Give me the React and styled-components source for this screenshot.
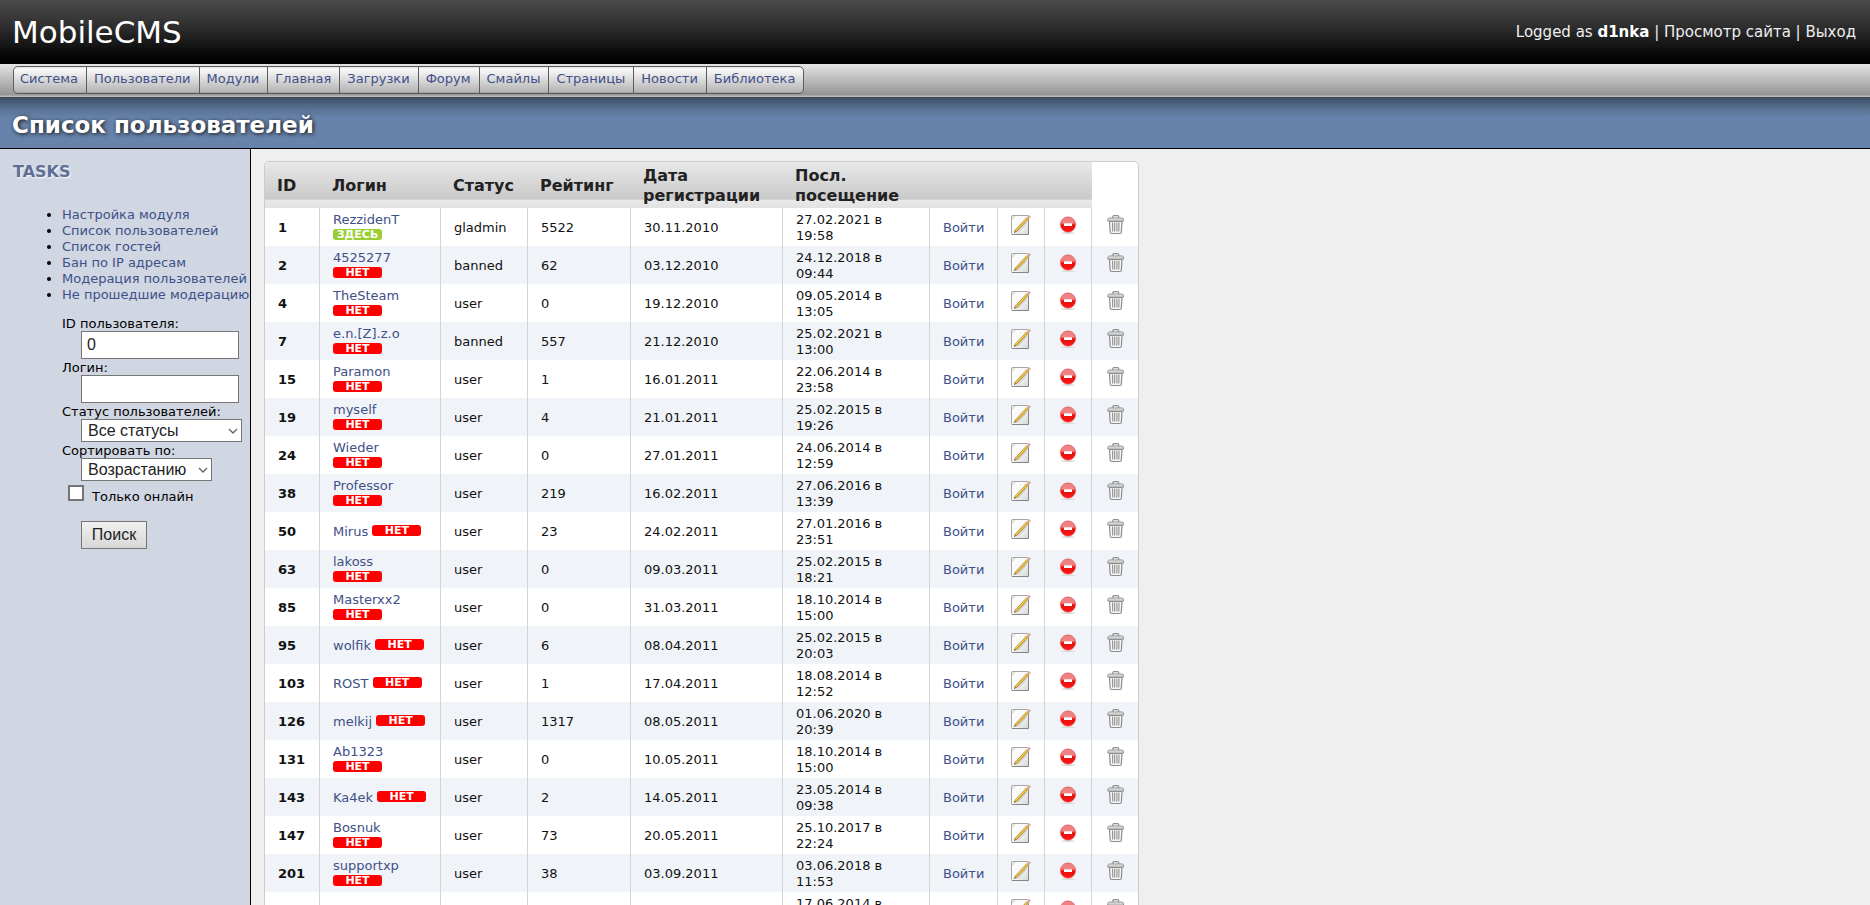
import React from 'react';
import styled, { createGlobalStyle } from 'styled-components';

const GlobalStyle = createGlobalStyle`
  html, body {
    margin: 0;
    padding: 0;
  }
  body {
    font-family: Verdana, "DejaVu Sans", sans-serif;
    font-size: 13px;
    line-height: 16px;
    color: #000;
    background-color: #efefef;
  }
  a {
    color: #405088;
    text-decoration: none;
  }
  a:hover {
    text-decoration: underline;
  }
`;

const Page = styled.div`
  display: flex;
  flex-direction: column;
  min-height: 100vh;
`;

const Header = styled.header`
  display: flex;
  align-items: center;
  justify-content: space-between;
  height: 64px;
  padding: 0 14px 0 12px;
  color: #fff;
  background: linear-gradient(#4b4b4b, #333 35%, #000 95%);
`;

const Logo = styled.h1`
  margin: 0;
  font-size: 31px;
  font-weight: normal;
  line-height: 36px;
`;

const UserBox = styled.div`
  font-size: 15px;
  line-height: 18px;
  color: #eee;
  a {
    color: #eee;
  }
  strong {
    color: #fff;
  }
`;

const NavBar = styled.nav`
  display: flex;
  box-sizing: border-box;
  height: 34px;
  padding: 2px 13px;
  border-bottom: 1px solid #484848;
  background: linear-gradient(#e4e4e4, #949494 31px, #bababa 32px);
`;

const NavList = styled.ul`
  display: flex;
  box-sizing: border-box;
  height: 28px;
  margin: 0;
  padding: 0;
  list-style: none;
  border: 1px solid #5c5c5c;
  border-radius: 5px;
  background: linear-gradient(#e8e8e8 1px, #fafafa 2px, #b4b4b4 25px, #909090 26px);
`;

const NavItem = styled.li`
  padding: 4px 8px 0 7px;
  & + & {
    border-left: 1px solid #5c5c5c;
  }
  &:first-child {
    padding-left: 6px;
  }
`;

const TitleBar = styled.div`
  box-sizing: border-box;
  height: 51px;
  padding: 14px 12px 0;
  border-bottom: 1px solid #000;
  background: linear-gradient(#3f4e67, #57708f 10px, #6883ab 20px);
`;

const Title = styled.h2`
  margin: 0;
  font-size: 23px;
  line-height: 26px;
  color: #fff;
  text-shadow: 1px 1px 4px #111;
`;

const Main = styled.div`
  display: flex;
  flex: 1;
`;

const Sidebar = styled.aside`
  flex: none;
  width: 250px;
  border-right: 1px solid #000;
  background-color: #d0d6e2;
`;

const TasksTitle = styled.h3`
  margin: 13px 13px 0;
  font-size: 16px;
  line-height: 20px;
  color: #5f6f94;
  text-shadow: 1px 1px 2px #fff;
`;

const TaskList = styled.ul`
  margin: 25px 0 0;
  padding-left: 62px;
  white-space: nowrap;
`;

const SearchForm = styled.form`
  display: flex;
  flex-direction: column;
  align-items: flex-start;
  gap: 1px;
  padding: 13px 8px 0 62px;
`;

const Field = styled.div`
  display: flex;
  flex-direction: column;
  align-items: flex-start;
  label {
    line-height: 15px;
    white-space: nowrap;
  }
`;

const control = `
  box-sizing: border-box;
  margin: 0 0 0 19px;
  border: 1px solid #767676;
  border-radius: 0;
  color: #222;
  font-family: "Liberation Sans", Arial, sans-serif;
  font-size: 16px;
`;

const TextInput = styled.input`
  ${control}
  width: 158px;
  height: 28px;
  padding: 0 5px;
  background-color: #fff;
`;

const SelectBox = styled.div`
  position: relative;
  svg {
    position: absolute;
    top: 8px;
    right: 4px;
    pointer-events: none;
  }
`;

const Select = styled.select`
  ${control}
  display: block;
  appearance: none;
  width: ${({ $wide }) => ($wide ? '161px' : '131px')};
  height: 23px;
  padding: 0 6px;
  background-color: #fff;
`;

const CheckRow = styled.label`
  display: flex;
  align-items: flex-start;
  gap: 8px;
  padding: 3px 0 0 6px;
  span {
    padding-top: 4px;
  }
`;

const Checkbox = styled.input`
  appearance: none;
  box-sizing: border-box;
  width: 16px;
  height: 16px;
  margin: 0;
  border: 2px solid #767676;
  background-color: #fff;
  &:checked {
    background-color: #405088;
  }
`;

const SearchButton = styled.button`
  ${control}
  width: 66px;
  height: 28px;
  margin-top: 15px;
  padding: 0;
  background: linear-gradient(#f0f0f0, #d8d8d8);
`;

const Content = styled.main`
  flex: 1;
  padding: 12px 13px;
`;

const UsersTable = styled.table`
  table-layout: fixed;
  width: 875px;
  border: 1px solid #ccc;
  border-radius: 5px;
  border-spacing: 0;
  background-color: #fff;
  overflow: hidden;
`;

const Col = styled.col`
  width: ${({ $w }) => $w}px;
`;

const HeadCell = styled.th`
  padding: 4px 12px 2px;
  font-size: 16px;
  line-height: 20px;
  text-align: left;
  color: #222;
  white-space: nowrap;
  background: linear-gradient(#e9e9e9, #dedede 12px, #cacaca 37px, #dcdcdc 38px) 0 0 / 100% 38px;
`;

const Row = styled.tr`
  &:nth-child(even) {
    background-color: #f0f4f9;
  }
`;

const Cell = styled.td`
  padding: 4px 13px 2px;
  border-right: 1px solid #d4d4d4;
  color: #111;
  font-weight: ${({ $bold }) => ($bold ? 'bold' : 'normal')};
  &:last-child {
    border-right: 0;
  }
`;

const IconCell = styled(Cell)`
  padding: 3px 13px;
`;

const Badge = styled.span`
  display: inline-block;
  overflow: hidden;
  width: 49px;
  height: 11px;
  border-radius: 3px;
  font-size: 11px;
  font-weight: bold;
  line-height: 11px;
  text-align: center;
  color: #fff;
  background-color: ${({ $online }) => ($online ? '#9acd32' : '#f00')};
`;

const navItems = [
  'Система', 'Пользователи', 'Модули', 'Главная', 'Загрузки',
  'Форум', 'Смайлы', 'Страницы', 'Новости', 'Библиотека',
];

const tasks = [
  'Настройка модуля',
  'Список пользователей',
  'Список гостей',
  'Бан по IP адресам',
  'Модерация пользователей',
  'Не прошедшие модерацию',
];

const columns = [55, 121, 87, 103, 152, 147, 68, 47, 47, 46];

const shortLogins = ['Mirus', 'wolfik', 'ROST', 'melkij', 'Ka4ek'];

const users = [
  ['1', 'RezzidenT', 'gladmin', '5522', '30.11.2010', '27.02.2021 в 19:58', true],
  ['2', '4525277', 'banned', '62', '03.12.2010', '24.12.2018 в 09:44'],
  ['4', 'TheSteam', 'user', '0', '19.12.2010', '09.05.2014 в 13:05'],
  ['7', 'e.n.[Z].z.o', 'banned', '557', '21.12.2010', '25.02.2021 в 13:00'],
  ['15', 'Paramon', 'user', '1', '16.01.2011', '22.06.2014 в 23:58'],
  ['19', 'myself', 'user', '4', '21.01.2011', '25.02.2015 в 19:26'],
  ['24', 'Wieder', 'user', '0', '27.01.2011', '24.06.2014 в 12:59'],
  ['38', 'Professor', 'user', '219', '16.02.2011', '27.06.2016 в 13:39'],
  ['50', 'Mirus', 'user', '23', '24.02.2011', '27.01.2016 в 23:51'],
  ['63', 'lakoss', 'user', '0', '09.03.2011', '25.02.2015 в 18:21'],
  ['85', 'Masterxx2', 'user', '0', '31.03.2011', '18.10.2014 в 15:00'],
  ['95', 'wolfik', 'user', '6', '08.04.2011', '25.02.2015 в 20:03'],
  ['103', 'ROST', 'user', '1', '17.04.2011', '18.08.2014 в 12:52'],
  ['126', 'melkij', 'user', '1317', '08.05.2011', '01.06.2020 в 20:39'],
  ['131', 'Ab1323', 'user', '0', '10.05.2011', '18.10.2014 в 15:00'],
  ['143', 'Ka4ek', 'user', '2', '14.05.2011', '23.05.2014 в 09:38'],
  ['147', 'Bosnuk', 'user', '73', '20.05.2011', '25.10.2017 в 22:24'],
  ['201', 'supportxp', 'user', '38', '03.09.2011', '03.06.2018 в 11:53'],
];

const Chevron = () => (
  <svg width="10" height="8" viewBox="0 0 10 8" aria-hidden="true">
    <path d="M1 2l4 4 4-4" fill="none" stroke="#666" strokeWidth="1.4" />
  </svg>
);

const EditIcon = () => (
  <svg width="20" height="20" viewBox="0 0 20 20" role="img" aria-label="Редактировать">
    <defs>
      <linearGradient id="sheet" x1="0" y1="0" x2="1" y2="1">
        <stop offset="0" stopColor="#fff" />
        <stop offset=".5" stopColor="#f8f8f8" />
        <stop offset="1" stopColor="#d6d6d6" />
      </linearGradient>
    </defs>
    <rect x=".5" y=".5" width="17" height="19" rx=".8" fill="url(#sheet)" stroke="#a6a6a6" />
    <path d="M17.5 5v14.500H1" fill="none" stroke="#858585" />
    <path d="M1 4.500C3 4.500 4.500 3 4.500 1H1z" fill="#e4e4e4" />
    <path d="M4.500 17.600L15.500 6v3L7.500 17.600z" fill="#c4c4c4" opacity=".6" />
    <path d="M3.300 17.500l.9-2.600L16.200 2.300l1.500 1.500L5.800 16.400z" fill="#e8b024" stroke="#8d702c" strokeWidth=".5" />
    <path d="M5 15.300L16.700 3.200" stroke="#ffdc66" strokeWidth=".7" />
    <path d="M16.200 2.300L18 .6c.7-.5 2 .7 1.400 1.500l-1.700 1.700z" fill="#e0aa98" stroke="#c3a49a" strokeWidth=".4" />
    <path d="M3.300 17.500l.4-1.300.9.800z" fill="#222" />
  </svg>
);

const BanIcon = () => (
  <svg width="20" height="20" viewBox="0 0 20 20" role="img" aria-label="Заблокировать">
    <defs>
      <linearGradient id="ban" x1="0" y1="0" x2="0" y2="1">
        <stop offset="0" stopColor="#e03c3c" />
        <stop offset=".48" stopColor="#ea4444" />
        <stop offset=".52" stopColor="#e80c0c" />
        <stop offset="1" stopColor="#ff1a1a" />
      </linearGradient>
    </defs>
    <ellipse cx="10" cy="18" rx="7" ry="1.200" fill="#ddd" />
    <circle cx="10" cy="9.500" r="7.800" fill="url(#ban)" stroke="#e88" strokeWidth=".5" />
    <path d="M3 8.500a7 6.300 0 0 1 14 0z" fill="#fff" opacity=".35" />
    <rect x="6" y="8.200" width="8" height="2.800" rx=".3" fill="#fff" />
  </svg>
);

const TrashIcon = () => (
  <svg width="20" height="20" viewBox="0 0 20 20" role="img" aria-label="Удалить">
    <g fill="none" stroke="#8c8c8c">
      <path d="M7.800 3V2q0-1.300 1.300-1.300h3.300q1.300 0 1.300 1.300v1" strokeWidth="1.200" />
      <path d="M4.500 6.500l.7 10.800q.1 1.200 1.300 1.200h8.500q1.200 0 1.300-1.200L17 6.500z" fill="#f7f7f7" strokeWidth="1.200" />
      <path d="M2.700 6l.6-2.400q.2-.6.900-.6h13q.7 0 .9.600l.6 2.400z" fill="#f4f4f4" />
      <path d="M3.500 4.500h14.500" stroke="#bbb" strokeWidth=".6" />
      <path d="M7.600 7.500l.2 9M9.700 7.500v9M11.900 7.500v9M14 7.500l-.2 9" stroke="#858585" />
    </g>
  </svg>
);

const UserRow = ({ user }) => {
  const [id, login, status, rating, registered, lastVisit, online] = user;
  return (
    <Row>
      <Cell $bold>{id}</Cell>
      <Cell>
        <a href="#user">{login}</a>
        {shortLogins.includes(login) ? ' ' : <br />}
        <Badge $online={online}>{online ? 'ЗДЕСЬ' : 'НЕТ'}</Badge>
      </Cell>
      <Cell>{status}</Cell>
      <Cell>{rating}</Cell>
      <Cell>{registered}</Cell>
      <Cell>{lastVisit}</Cell>
      <Cell><a href="#login">Войти</a></Cell>
      <Actions />
    </Row>
  );
};

const Actions = () => (
  <>
    <IconCell><a href="#edit"><EditIcon /></a></IconCell>
    <IconCell><a href="#ban"><BanIcon /></a></IconCell>
    <IconCell><a href="#delete"><TrashIcon /></a></IconCell>
  </>
);

const App = () => (
  <Page>
    <GlobalStyle />
    <Header>
      <Logo>MobileCMS</Logo>
      <UserBox>
        Logged as <strong>d1nka</strong> | <a href="#site">Просмотр сайта</a> | <a href="#exit">Выход</a>
      </UserBox>
    </Header>
    <NavBar>
      <NavList>
        {navItems.map(item => (
          <NavItem key={item}><a href="#nav">{item}</a></NavItem>
        ))}
      </NavList>
    </NavBar>
    <TitleBar>
      <Title>Список пользователей</Title>
    </TitleBar>
    <Main>
      <Sidebar>
        <TasksTitle>TASKS</TasksTitle>
        <TaskList>
          {tasks.map(task => (
            <li key={task}><a href="#task">{task}</a></li>
          ))}
        </TaskList>
        <SearchForm onSubmit={e => e.preventDefault()}>
          <Field>
            <label htmlFor="user-id">ID пользователя:</label>
            <TextInput id="user-id" type="text" defaultValue="0" />
          </Field>
          <Field>
            <label htmlFor="login">Логин:</label>
            <TextInput id="login" type="text" />
          </Field>
          <Field>
            <label htmlFor="status">Статус пользователей:</label>
            <SelectBox>
              <Select id="status" $wide>
                <option>Все статусы</option>
              </Select>
              <Chevron />
            </SelectBox>
          </Field>
          <Field>
            <label htmlFor="sort">Сортировать по:</label>
            <SelectBox>
              <Select id="sort">
                <option>Возрастанию</option>
              </Select>
              <Chevron />
            </SelectBox>
          </Field>
          <CheckRow>
            <Checkbox type="checkbox" />
            <span>Только онлайн</span>
          </CheckRow>
          <SearchButton type="submit">Поиск</SearchButton>
        </SearchForm>
      </Sidebar>
      <Content>
        <UsersTable>
          <colgroup>
            {columns.map((w, i) => <Col key={i} $w={w} />)}
          </colgroup>
          <thead>
            <tr>
              <HeadCell>ID</HeadCell>
              <HeadCell>Логин</HeadCell>
              <HeadCell>Статус</HeadCell>
              <HeadCell>Рейтинг</HeadCell>
              <HeadCell>Дата<br />регистрации</HeadCell>
              <HeadCell>Посл.<br />посещение</HeadCell>
              <HeadCell colSpan={3} />
            </tr>
          </thead>
          <tbody>
            {users.map(user => <UserRow key={user[0]} user={user} />)}
            <Row>
              <Cell />
              <Cell />
              <Cell />
              <Cell />
              <Cell />
              <Cell>17.06.2014 в<br />&nbsp;</Cell>
              <Cell />
              <Actions />
            </Row>
          </tbody>
        </UsersTable>
      </Content>
    </Main>
  </Page>
);

export default App;
